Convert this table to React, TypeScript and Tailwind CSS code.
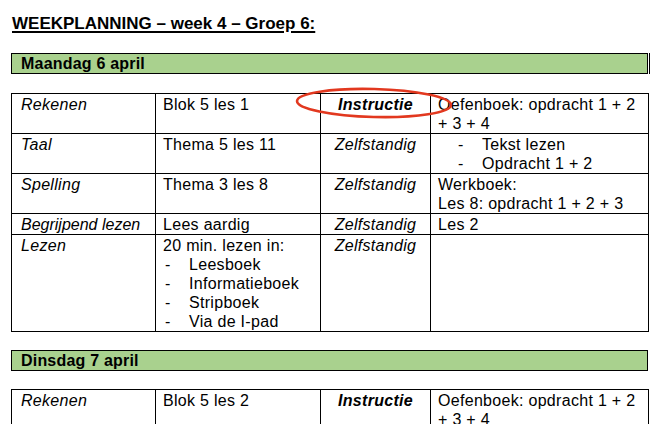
import React from 'react';

type Row = {
  vak: string;
  les: React.ReactNode;
  vorm: string;
  taak: React.ReactNode;
};

const Dash = ({ items }: { items: string[] }) => (
  <ul>
    {items.map((item) => (
      <li key={item} className="flex">
        <span className="w-[26px] shrink-0 pl-[2px]">-</span>
        <span>{item}</span>
      </li>
    ))}
  </ul>
);

const maandag: Row[] = [
  { vak: 'Rekenen', les: 'Blok 5 les 1', vorm: 'Instructie', taak: 'Oefenboek: opdracht 1 + 2 + 3 + 4' },
  {
    vak: 'Taal',
    les: 'Thema 5 les 11',
    vorm: 'Zelfstandig',
    taak: (
      <div className="pl-[18px]">
        <Dash items={['Tekst lezen', 'Opdracht 1 + 2']} />
      </div>
    )
  },
  {
    vak: 'Spelling',
    les: 'Thema 3 les 8',
    vorm: 'Zelfstandig',
    taak: (
      <>
        <div>Werkboek:</div>
        <div>Les 8: opdracht 1 + 2 + 3</div>
      </>
    )
  },
  { vak: 'Begrijpend lezen', les: 'Lees aardig', vorm: 'Zelfstandig', taak: 'Les 2' },
  {
    vak: 'Lezen',
    les: (
      <>
        <div>20 min. lezen in:</div>
        <Dash items={['Leesboek', 'Informatieboek', 'Stripboek', 'Via de I-pad']} />
      </>
    ),
    vorm: 'Zelfstandig',
    taak: ''
  }
];

const dinsdag: Row[] = [
  { vak: 'Rekenen', les: 'Blok 5 les 2', vorm: 'Instructie', taak: 'Oefenboek: opdracht 1 + 2 + 3 + 4' }
];

const DayBar = ({ label, edge }: { label: string; edge?: boolean }) => (
  <div
    className={`ml-[11px] h-[21px] w-[637px] border border-black bg-[#a9d18e] pl-[9px] text-[16px] font-bold leading-[19px] tracking-[0.2px] ${
      edge ? 'shadow-[1px_0_0_0_white,2px_0_0_0_black]' : ''
    }`}
  >
    {label}
  </div>
);

const DayTable = ({ rows, mark }: { rows: Row[]; mark?: boolean }) => (
  <table className="ml-[11px] w-[637px] table-fixed border-collapse text-[16px] leading-[19px] tracking-[0.3px]">
    <colgroup>
      <col className="w-[144px]" />
      <col className="w-[165px]" />
      <col className="w-[110px]" />
      <col className="w-[218px]" />
    </colgroup>
    <tbody>
      {rows.map((row, i) => {
        const short = row.vak === 'Begrijpend lezen';
        return (
          <tr key={row.vak} className="align-top">
            <td className={`border border-black pl-[9px] pt-px italic ${short ? 'tracking-[0px]' : ''}`}>{row.vak}</td>
            <td className="border border-black pl-[7px] pt-px">{row.les}</td>
            <td
              className={`relative border border-black pt-px text-center italic ${
                row.vorm === 'Instructie' ? 'font-bold' : ''
              }`}
            >
              {row.vorm}
              {mark && i === 0 && (
                <svg
                  className="pointer-events-none absolute left-[-26px] top-[-6px] overflow-visible"
                  width="160"
                  height="34"
                  viewBox="0 0 160 34"
                >
                  <ellipse
                    cx="79"
                    cy="15"
                    rx="77"
                    ry="14"
                    fill="none"
                    stroke="#e2381f"
                    strokeWidth="2.6"
                    transform="rotate(1.5 79 15)"
                  />
                </svg>
              )}
            </td>
            <td className="border border-black pl-[7px] pt-px">{row.taak}</td>
          </tr>
        );
      })}
    </tbody>
  </table>
);

export default function App() {
  return (
    <div className="h-[424px] w-[660px] overflow-hidden bg-white font-['Liberation_Sans',Arial,sans-serif] text-black">
      <h1 className="ml-[12px] pt-[14px] text-[17px] font-bold leading-[20px] underline decoration-[1.5px] underline-offset-[2px]">
        WEEKPLANNING – week 4 – Groep 6:
      </h1>
      <div className="mt-[19px]">
        <DayBar label="Maandag 6 april" edge />
      </div>
      <div className="mt-[19px]">
        <DayTable rows={maandag} mark />
      </div>
      <div className="mt-[18px]">
        <DayBar label="Dinsdag 7 april" />
      </div>
      <div className="mt-[18px]">
        <DayTable rows={dinsdag} />
      </div>
    </div>
  );
}
